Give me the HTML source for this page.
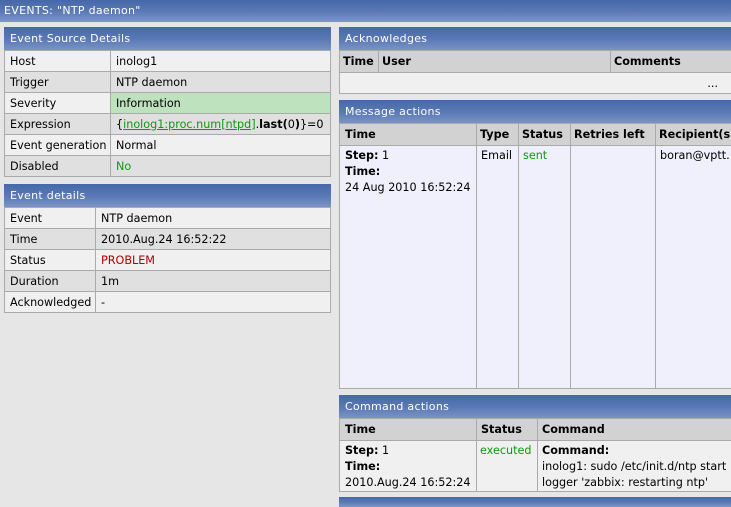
<!DOCTYPE html>
<html><head><meta charset="utf-8"><style>
*{margin:0;padding:0;box-sizing:border-box}
body{width:731px;height:503px;overflow:hidden;background:#e6e6e6;font-family:"DejaVu Sans","Liberation Sans",sans-serif;font-size:11.2px;color:#000;position:relative}
.bar{position:absolute;background:linear-gradient(#4668a8,#5a78b4 50%,#7d96c6);color:#fff;font-size:11px;padding-left:6px;line-height:23px;letter-spacing:0.3px}
table{position:absolute;border-collapse:collapse;table-layout:fixed;background:#f0f0f0}
td,th{border:1px solid #aaa;padding:0 5px;height:21px;text-align:left;white-space:nowrap;overflow:hidden;vertical-align:middle}
th{background:#d2d2d2;font-weight:bold;height:22px}
tr.b td{background:#e0e0e0}
.g{color:#0a9c0a}.r{color:#b00000}
.top td{vertical-align:top;line-height:16px;padding-top:2px}
a{color:#0a9c0a;text-decoration:underline}
</style></head><body>
<div class="bar" style="left:0;top:0;width:731px;height:22px;line-height:22px;padding-left:4px">EVENTS: "NTP daemon"</div>

<div class="bar" style="left:4px;top:27px;width:327px;height:24px">Event Source Details</div>
<table style="left:4px;top:50px;width:327px">
<col style="width:106px"><col>
<tr><td>Host</td><td>inolog1</td></tr>
<tr class="b"><td>Trigger</td><td>NTP daemon</td></tr>
<tr><td>Severity</td><td style="background:#bde2bd">Information</td></tr>
<tr class="b"><td>Expression</td><td>{<a>inolog1:proc.num[ntpd]</a>.<b>last(</b>0<b>)</b>}=0</td></tr>
<tr><td>Event generation</td><td>Normal</td></tr>
<tr class="b"><td>Disabled</td><td class="g">No</td></tr>
</table>

<div class="bar" style="left:4px;top:184px;width:327px;height:24px">Event details</div>
<table style="left:4px;top:207px;width:327px">
<col style="width:91px"><col>
<tr><td>Event</td><td>NTP daemon</td></tr>
<tr class="b"><td>Time</td><td>2010.Aug.24 16:52:22</td></tr>
<tr><td>Status</td><td class="r">PROBLEM</td></tr>
<tr class="b"><td>Duration</td><td>1m</td></tr>
<tr><td>Acknowledged</td><td>-</td></tr>
</table>

<div class="bar" style="left:339px;top:27px;width:400px;height:24px">Acknowledges</div>
<table style="left:339px;top:50px;width:400px">
<col style="width:39px"><col style="width:232px"><col>
<tr><th style="padding-left:3px">Time</th><th style="padding-left:3px">User</th><th style="padding-left:3px">Comments</th></tr>
<tr><td colspan="3" style="text-align:right;padding-right:20px">...</td></tr>
</table>

<div class="bar" style="left:339px;top:100px;width:400px;height:24px">Message actions</div>
<table style="left:339px;top:123px;width:400px">
<col style="width:137px"><col style="width:42px"><col style="width:52px"><col style="width:85px"><col>
<tr><th>Time</th><th style="padding-left:3px">Type</th><th style="padding-left:3px">Status</th><th style="padding-left:3px">Retries left</th><th style="padding-left:3px">Recipient(s)</th></tr>
<tr class="top"><td style="height:243px;background:#f0f0fc"><b>Step:</b> 1<br><b>Time:</b><br>24 Aug 2010 16:52:24</td><td style="background:#f0f0fc;padding-left:4px">Email</td><td class="g" style="background:#f0f0fc;padding-left:4px">sent</td><td style="background:#f0f0fc"></td><td style="background:#f0f0fc;padding-left:4px">boran@vptt.</td></tr>
</table>

<div class="bar" style="left:339px;top:395px;width:400px;height:24px">Command actions</div>
<table style="left:339px;top:418px;width:400px">
<col style="width:137px"><col style="width:61px"><col>
<tr><th>Time</th><th style="padding-left:4px">Status</th><th style="padding-left:4px">Command</th></tr>
<tr class="top"><td style="height:50px"><b>Step:</b> 1<br><b>Time:</b><br>2010.Aug.24 16:52:24</td><td class="g" style="padding-left:3px">executed</td><td style="padding-left:4px"><b>Command:</b><br>inolog1: sudo /etc/init.d/ntp start<br>logger 'zabbix: restarting ntp'</td></tr>
</table>

<div class="bar" style="left:339px;top:497px;width:400px;height:10px"></div>
</body></html>
